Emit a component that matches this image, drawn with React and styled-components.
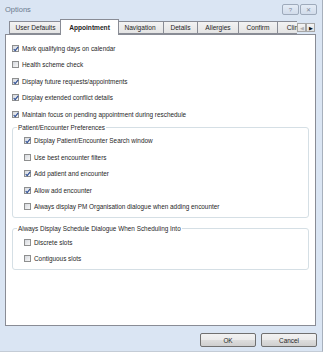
import React from 'react';
import styled, { createGlobalStyle } from 'styled-components';

const tabs = [
    { name: 'User Defaults', width: 53 },
    { name: 'Appointment', width: 59, active: true },
    { name: 'Navigation', width: 47 },
    { name: 'Details', width: 34 },
    { name: 'Allergies', width: 41 },
    { name: 'Confirm', width: 39 },
    { name: 'Clinical', width: 40 },
];

const general = [
    { label: 'Mark qualifying days on calendar', checked: true },
    { label: 'Health scheme check', checked: false },
    { label: 'Display future requests/appointments', checked: true },
    { label: 'Display extended conflict details', checked: true },
    { label: 'Maintain focus on pending appointment during reschedule', checked: true },
];

const encounter = [
    { label: 'Display Patient/Encounter Search window', checked: true },
    { label: 'Use best encounter filters', checked: false },
    { label: 'Add patient and encounter', checked: true },
    { label: 'Allow add encounter', checked: true },
    { label: 'Always display PM Organisation dialogue when adding encounter', checked: false },
];

const slots = [
    { label: 'Discrete slots', checked: false },
    { label: 'Contiguous slots', checked: false },
];

const Check = ({ label, checked }) => (
    <Row>
        <Box>
            {checked && (
                <svg width="6" height="6" viewBox="0 0 6 6">
                    <path d="M0.7 3.1 L2.2 4.6 L5.2 0.9" fill="none" stroke="#2f4f95" strokeWidth="1.2" />
                </svg>
            )}
        </Box>
        <span>{label}</span>
    </Row>
);

const App = () => {
    return (
        <>
            <GlobalStyle />
            <Window>
                <TitleBar>
                    <Title>Options</Title>
                    <Caption>
                        <CaptionButton>?</CaptionButton>
                        <CaptionButton>✕</CaptionButton>
                    </Caption>
                </TitleBar>
                <TabStrip>
                    <TabViewport>
                        {tabs.map(tab => (
                            <Tab key={tab.name} $active={tab.active} $width={tab.width}>{tab.name}</Tab>
                        ))}
                    </TabViewport>
                    <Arrows>
                        <Arrow $dim>◀</Arrow>
                        <Arrow>▶</Arrow>
                    </Arrows>
                </TabStrip>
                <Panel>
                    {general.map(item => <Check key={item.label} {...item} />)}
                    <Group>
                        <Legend>Patient/Encounter Preferences</Legend>
                        <GroupRows>
                            {encounter.map(item => <Check key={item.label} {...item} />)}
                        </GroupRows>
                    </Group>
                    <Group $second>
                        <Legend>Always Display Schedule Dialogue When Scheduling Into</Legend>
                        <GroupRows>
                            {slots.map(item => <Check key={item.label} {...item} />)}
                        </GroupRows>
                    </Group>
                </Panel>
                <Footer>
                    <Button>OK</Button>
                    <Button>Cancel</Button>
                </Footer>
            </Window>
        </>
    )
}

export default App


const GlobalStyle = createGlobalStyle`
    body{
        margin: 0;
        background-color: #ffffff;
        font-family: "Liberation Sans", Arial, sans-serif;
        color: #1f1f1f;
    }
`;
const Window = styled.div`
    width: 322px;
    height: 351px;
    background-color: #dae5f3;
    border-right: 1px solid #a7b0bc;
    border-bottom: 1px solid #c4ccd6;
    display: flex;
    flex-direction: column;
`;
const TitleBar = styled.div`
    height: 19px;
    display: flex;
    align-items: center;
    justify-content: space-between;
    padding: 0 5px 0 5px;
`;
const Title = styled.div`
    font-size: 7.5px;
    color: #6a7a8e;
`;
const Caption = styled.div`
    display: flex;
    gap: 1px;
    align-self: flex-start;
    margin-top: 4px;
`;
const CaptionButton = styled.div`
    width: 15px;
    height: 9px;
    border: 1px solid #9eaabb;
    border-radius: 2px;
    background: linear-gradient(#e4ecf6, #d2dceb);
    color: #7b8798;
    font-size: 6px;
    display: grid;
    place-items: center;
    line-height: 1;
`;
const TabStrip = styled.div`
    display: flex;
    align-items: flex-end;
    height: 16px;
    padding-left: 9px;
    margin-bottom: -1px;
    position: relative;
    z-index: 1;
`;
const TabViewport = styled.div`
    width: 288px;
    height: 100%;
    overflow: hidden;
    display: flex;
    align-items: flex-end;
`;
const Tab = styled.div`
    flex: none;
    box-sizing: border-box;
    width: ${p => p.$width}px;
    height: ${p => p.$active ? 16 : 13}px;
    margin: ${p => p.$active ? '0 -2px 0 -2px' : '0 0 1px 0'};
    border: 1px solid #898c95;
    border-bottom: ${p => p.$active ? 'none' : '1px solid #898c95'};
    border-left-width: ${p => p.$active ? 1 : 0}px;
    background: ${p => p.$active ? '#ffffff' : 'linear-gradient(#f3f3f3, #e4e4e4)'};
    font-size: 6.6px;
    font-weight: ${p => p.$active ? 'bold' : 'normal'};
    display: flex;
    align-items: center;
    justify-content: ${p => p.$width > 39 && p.$last ? 'flex-start' : 'center'};
    white-space: nowrap;
    overflow: hidden;
    position: relative;
    z-index: ${p => p.$active ? 1 : 0};
    &:first-child{
        border-left-width: 1px;
    }
`;
const Arrows = styled.div`
    display: flex;
    margin-bottom: 3px;
    background-color: #dae5f3;
`;
const Arrow = styled.div`
    width: 9px;
    height: 9px;
    box-sizing: border-box;
    border: 1px solid #a6a6a6;
    background: linear-gradient(#f4f4f4, #e2e2e2);
    color: ${p => p.$dim ? '#b0b0b0' : '#111111'};
    font-size: 5px;
    display: grid;
    place-items: center;
`;
const Panel = styled.div`
    margin: 0 6px 0 5px;
    background-color: #ffffff;
    border: 1px solid #898c95;
    padding: 5px 6px 0 6px;
    box-sizing: border-box;
    height: 292px;
`;
const Row = styled.div`
    height: 16.5px;
    display: flex;
    align-items: center;
    gap: 3px;
    font-size: 6.4px;
    white-space: nowrap;
`;
const Box = styled.div`
    width: 7px;
    height: 7px;
    box-sizing: border-box;
    border: 1px solid #8e8f8f;
    background: linear-gradient(135deg, #d6d9de, #f7f7f7);
    display: grid;
    place-items: center;
    flex: none;
`;
const Group = styled.fieldset`
    margin: ${p => p.$second ? '7px' : '1px'} 0 0 0;
    padding: 0 3px 2px 3px;
    border: 1px solid #d5dfe5;
    border-radius: 3px;
    width: 297px;
    box-sizing: border-box;
`;
const Legend = styled.legend`
    padding: 0 1px;
    font-size: 6.4px;
    margin-left: 1px;
`;
const GroupRows = styled.div`
    padding: 2px 0 0 8px;
`;
const Footer = styled.div`
    display: flex;
    justify-content: flex-end;
    gap: 5px;
    padding: 7px 5px 0 0;
`;
const Button = styled.div`
    width: 56px;
    height: 14px;
    box-sizing: border-box;
    border: 1px solid #707070;
    border-radius: 2px;
    background: linear-gradient(#f2f2f2 0%, #ebebeb 50%, #dddddd 51%, #cfcfcf 100%);
    font-size: 6.4px;
    display: grid;
    place-items: center;
`;
